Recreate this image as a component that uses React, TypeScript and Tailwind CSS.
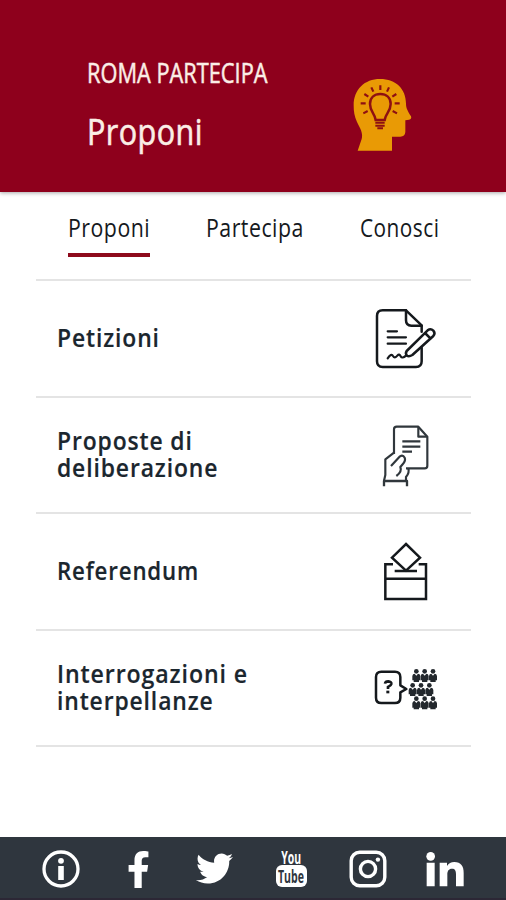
import React, { useState } from 'react';
import { FaFacebookF, FaTwitter } from 'react-icons/fa';

interface Section {
  id: string;
  lines: { text: string; scale: string }[];
  icon: React.ReactNode;
}

const HeadIcon = () => (
  <svg className="h-[100px] w-[90px]" viewBox="0 0 270 300" fill="none">
    <path
      d="M53 257L65 222C70 205 61 191 51 171C43 153 41 140 41 121C41 73 74 42 120 42C168 42 198 72 198 116C198 129 203 137 213 154Q216 163 207 164L196 166V201Q195 215 181 215H156V257Z"
      fill="#e99a05"
    />
    <g stroke="#8e1012">
      <path d="M107 165C105 146 90 140 90 117C90 98 103 87 121 87C139 87 152 98 152 117C152 140 136 146 134 165Z" strokeWidth="7.5" />
      <path d="M106 173H134M106 182H134M112 190H129" strokeWidth="6" />
      <path d="M121 61V75M94 67L100 80M147 67L141 80M73 87L85 95M169 87L157 95M62 115H77M164 115H179M70 145L83 138M171 145L158 138" strokeWidth="6.5" />
    </g>
  </svg>
);

const PetitionIcon = () => (
  <svg className="mt-0.5 size-20" viewBox="0 0 240 240" fill="none" stroke="#15191d" strokeWidth="7.5" strokeLinecap="round" strokeLinejoin="round">
    <path d="M170 143V184Q170 201 153 201H53Q36 201 36 184V48Q36 31 53 31H123L170 76V95" />
    <path d="M123 31V61Q123 77 139 77H170" />
    <path d="M68 94H96M68 112H123M68 131H123" strokeWidth="6.5" />
    <path d="M68 175Q79 158 84 168Q89 177 97 167Q103 160 107 169Q112 177 123 167" strokeWidth="6.5" />
    <path d="M125 153L188 91Q197 84 205 92Q212 100 205 108L142 165Q132 171 126 167Q120 161 125 153ZM180 99L197 116" />
  </svg>
);

const ProposalIcon = () => (
  <svg className="size-20" viewBox="-15 0 240 240" fill="none" stroke="#30373c" strokeWidth="6.5" strokeLinejoin="round">
    <path d="M72 114V40Q72 32 80 32H145L172 62V149Q172 157 164 157H108" />
    <path d="M145 33V62H171" />
    <path d="M97 76H151M97 92H151M97 107H126" />
    <path d="M72 110L46 130V177L42 194M63 150L90 121Q99 116 104 125Q108 134 98 145L91 153Q97 167 79 180M115 157Q119 170 108 183V194" />
    <path d="M42 211V195H111V211" strokeWidth="7" />
  </svg>
);

const ReferendumIcon = () => (
  <svg className="size-20" viewBox="-15 -10 240 240" fill="none" stroke="#15191d" strokeWidth="7.5">
    <path d="M69 87H46V191H168V87H146M46 130H168" />
    <path d="M108 26L150 67L108 106L66 67Z" />
    <path d="M74 107H141" />
  </svg>
);

const people = [
  [154, 40], [179, 40], [204, 40],
  [143, 82], [168, 82], [193, 82],
  [154, 122], [179, 122], [204, 122],
];

const QuestionIcon = () => (
  <svg className="size-20" viewBox="0 -21 240 240" fill="none">
    <path
      d="M49 47H90Q106 47 106 63V88L124 99L106 109V125Q106 141 90 141H49Q33 141 33 125V63Q33 47 49 47Z"
      stroke="#15191d"
      strokeWidth="7.5"
      strokeLinejoin="round"
    />
    <path d="M60 83Q61 76 70 76Q80 77 79 84Q78 89 69 93V99" stroke="#15191d" strokeWidth="8" />
    <rect x="64" y="104" width="9" height="8" fill="#15191d" />
    {people.map(([x, y]) => (
      <g key={`${x}-${y}`} transform={`translate(${x} ${y})`}>
        <circle cy="6" r="7" fill="#23282d" />
        <path d="M-12 20Q-11 13 -5 13L0 19L5 13Q11 13 12 20V33H8V38H-8V33H-12Z" fill="#23282d" />
      </g>
    ))}
  </svg>
);

const InfoIcon = () => (
  <svg className="size-[38px]" viewBox="0 0 38 38" fill="none">
    <circle cx="19" cy="19" r="17" stroke="white" strokeWidth="3.3" />
    <circle cx="19" cy="10.8" r="2.9" fill="white" />
    <path d="M16.2 16H21.8V30H16.2Z" fill="white" />
  </svg>
);

const YoutubeIcon = () => (
  <span className="flex flex-col items-center font-['Open_Sans',sans-serif] font-bold leading-none">
    <span className="h-[15px] scale-x-[0.58] text-[18px] leading-[15px] text-white">You</span>
    <span className="flex h-[22px] w-[31px] items-center justify-center rounded-md bg-white">
      <span className="scale-x-[0.62] text-[17px] text-[#2f363e]">Tube</span>
    </span>
  </span>
);

const InstagramIcon = () => (
  <svg className="size-[38px]" viewBox="0 0 38 38" fill="none" stroke="white" strokeWidth="3.4">
    <rect x="2.2" y="2.2" width="33.6" height="33.6" rx="8.5" />
    <circle cx="19" cy="19" r="7.6" />
    <circle cx="28.9" cy="9.6" r="2.2" fill="white" stroke="none" />
  </svg>
);

const LinkedinIcon = () => (
  <svg className="size-[38px]" viewBox="0 0 114 114" fill="white">
    <circle cx="14" cy="19" r="13" />
    <path d="M2 38H26V109H2ZM41 38H63V48C68 40 75 36 85 36C105 36 113 48 113 69V109H90V73C90 62 87 56 78 56C68 56 64 63 64 73V109H41Z" />
  </svg>
);

const tabs = [
  { id: 'proponi', label: 'Proponi', width: 'w-[82px]', scale: 'scale-x-[0.82]' },
  { id: 'partecipa', label: 'Partecipa', width: 'w-[98px]', scale: 'scale-x-[0.82]' },
  { id: 'conosci', label: 'Conosci', width: 'w-20', scale: 'scale-x-[0.8]' },
];

const sections: Section[] = [
  { id: 'petizioni', lines: [{ text: 'Petizioni', scale: 'scale-x-[0.88]' }], icon: <PetitionIcon /> },
  {
    id: 'proposte',
    lines: [
      { text: 'Proposte di', scale: 'scale-x-[0.88]' },
      { text: 'deliberazione', scale: 'scale-x-[0.88]' },
    ],
    icon: <ProposalIcon />,
  },
  { id: 'referendum', lines: [{ text: 'Referendum', scale: 'scale-x-[0.855]' }], icon: <ReferendumIcon /> },
  {
    id: 'interrogazioni',
    lines: [
      { text: 'Interrogazioni e', scale: 'scale-x-[0.89]' },
      { text: 'interpellanze', scale: 'scale-x-[0.88]' },
    ],
    icon: <QuestionIcon />,
  },
];

const social = [
  { id: 'info', icon: <InfoIcon /> },
  { id: 'facebook', icon: <FaFacebookF className="mt-0.5 size-[37px]" /> },
  { id: 'twitter', icon: <FaTwitter className="size-[37px]" /> },
  { id: 'youtube', icon: <YoutubeIcon /> },
  { id: 'instagram', icon: <InstagramIcon /> },
  { id: 'linkedin', icon: <LinkedinIcon /> },
];

const App: React.FC = () => {
  const [activeTab, setActiveTab] = useState('proponi');

  return (
    <div className="flex h-[900px] w-[506px] flex-col overflow-hidden bg-white font-['Open_Sans',sans-serif] text-[#15191d]">
      {/* Header */}
      <header className="flex h-48 shrink-0 justify-between bg-[#8e001c] pr-[76px] pl-[87px] text-[#fbeee6] shadow-[0_1px_4px_rgba(0,0,0,0.35)]">
        <div className="flex flex-col items-start gap-7 pt-[58px]">
          <p className="origin-left scale-x-[0.778] text-[28px] leading-none whitespace-nowrap [-webkit-text-stroke:0.5px]">
            ROMA PARTECIPA
          </p>
          <h1 className="origin-left scale-x-[0.85] text-[36px] leading-none tracking-[0.5px] [-webkit-text-stroke:0.6px]">Proponi</h1>
        </div>
        <div className="pt-[65px]">
          <HeadIcon />
        </div>
      </header>

      {/* Tabs */}
      <nav className="flex h-[87px] shrink-0 items-start gap-14 pt-[22px] pl-[68px]">
        {tabs.map(tab => (
          <button
            key={tab.id}
            onClick={() => setActiveTab(tab.id)}
            className={`flex h-[43px] items-start border-b-4 text-left ${tab.width} ${
              activeTab === tab.id ? 'border-[#8e0a1c]' : 'border-transparent'
            }`}
          >
            <span className={`block w-max shrink-0 origin-left text-[26px] leading-none tracking-[0.6px] ${tab.scale}`}>
              {tab.label}
            </span>
          </button>
        ))}
      </nav>

      {/* Sections */}
      <ul className="mr-[35px] ml-9 border-t-2 border-[#e4e4e4]">
        {sections.map(section => (
          <li
            key={section.id}
            className="flex h-[116.5px] items-center justify-between border-b-2 border-[#e4e4e4] pt-0.5 pr-[26px] pl-[21px]"
          >
            <div className="pb-1 text-[26px] leading-[27px] font-semibold tracking-[1px] text-[#1b262e] [-webkit-text-stroke:0.2px]">
              {section.lines.map(line => (
                <span key={line.text} className={`block w-max origin-left ${line.scale}`}>
                  {line.text}
                </span>
              ))}
            </div>
            {section.icon}
          </li>
        ))}
      </ul>

      {/* Footer */}
      <footer className="mt-auto flex h-[63px] shrink-0 items-center border-b-2 border-[#2c2735] bg-[#2f363e] px-[23px] pt-0.5 text-white">
        {social.map(item => (
          <a key={item.id} className="flex flex-1 justify-center" aria-label={item.id}>
            {item.icon}
          </a>
        ))}
      </footer>
    </div>
  );
};

export default App;
